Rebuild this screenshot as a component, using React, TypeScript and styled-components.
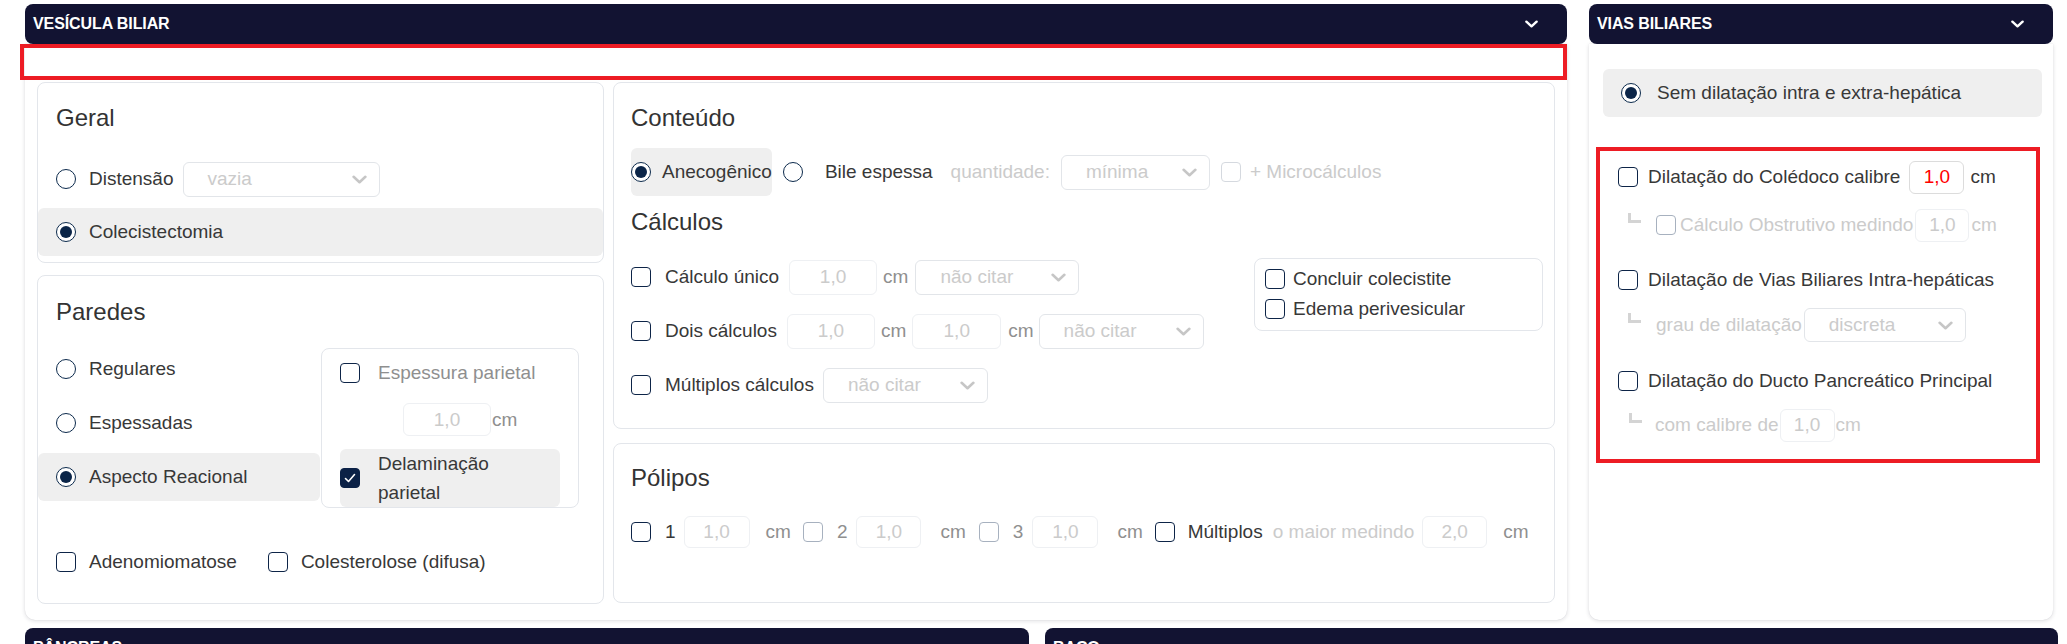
import React from "react";
import styled, { createGlobalStyle } from "styled-components";

type Tone = "dark" | "mid" | "light";

const toneColor = (t?: Tone) =>
  t === "mid" ? "#8f8f8f" : t === "light" ? "#cbcbcb" : "#383838";

const boxTone = (t?: Tone) =>
  t === "mid" ? "#a7b1bf" : t === "light" ? "#d5d9df" : "#0d2447";

const GlobalStyle = createGlobalStyle`
  html, body { margin: 0; padding: 0; background: #ffffff; overflow: hidden; }
  body {
    font-family: "Liberation Sans", Arial, Helvetica, sans-serif;
    font-size: 19px;
    color: #383838;
  }
  *, *::before, *::after { box-sizing: border-box; }
`;

const Page = styled.div`
  width: 2067px;
  height: 644px;
  overflow: hidden;
  padding: 4px 0 0 25px;
  display: flex;
  flex-direction: column;
  gap: 8px;
`;

const CardRow = styled.div<{ $gap: number }>`
  display: flex;
  align-items: flex-start;
  gap: ${(p) => p.$gap}px;
`;

const Card = styled.section<{ $w: number }>`
  width: ${(p) => p.$w}px;
  flex: none;
  display: flex;
  flex-direction: column;
`;

const CardHeader = styled.header`
  position: relative;
  z-index: 1;
  height: 40px;
  padding: 0 29px 0 8px;
  display: flex;
  align-items: center;
  justify-content: space-between;
  background: #121332;
  border-radius: 8px;
  color: #ffffff;
  font-size: 16px;
  font-weight: 700;
  letter-spacing: -0.1px;
`;

const CardBody = styled.div<{ $pad: string }>`
  height: 576px;
  padding: ${(p) => p.$pad};
  background: #ffffff;
  border-radius: 0 0 10px 10px;
  box-shadow: 0 1px 4px rgba(20, 24, 40, 0.14), 0 0 1px rgba(20, 24, 40, 0.14);
`;

const Annotation = styled.div`
  height: 36px;
  margin: 0 -12px 0 -17px;
  border: 4px solid #ed1c24;
`;

const VesGrid = styled.div`
  margin-top: 2px;
  display: grid;
  grid-template-columns: 567px 942px;
  column-gap: 9px;
  align-items: start;
`;

const Stack = styled.div<{ $gap: number; $w?: number; $pt?: number }>`
  display: flex;
  flex-direction: column;
  gap: ${(p) => p.$gap}px;
  width: ${(p) => (p.$w ? `${p.$w}px` : "auto")};
  padding-top: ${(p) => p.$pt ?? 0}px;
  flex: none;
`;

const Box = styled.div<{ $h: number; $pt: number; $pl?: number }>`
  height: ${(p) => p.$h}px;
  padding: ${(p) => p.$pt}px 0 0 ${(p) => p.$pl ?? 0}px;
  border: 1px solid #e3e6eb;
  border-radius: 8px;
  background: #ffffff;
`;

const BoxTitle = styled.h3<{ $ml?: number; $mt?: number; $mb: number }>`
  margin: ${(p) => p.$mt ?? 0}px 0 ${(p) => p.$mb}px ${(p) => p.$ml ?? 0}px;
  font-size: 24px;
  line-height: 28px;
  font-weight: 400;
  color: #333333;
`;

const Option = styled.div<{
  $h?: number;
  $pl?: number;
  $gap?: number;
  $hl?: boolean;
  $mt?: number;
}>`
  display: flex;
  align-items: center;
  flex: none;
  gap: ${(p) => p.$gap ?? 0}px;
  height: ${(p) => p.$h ?? 48}px;
  margin-top: ${(p) => p.$mt ?? 0}px;
  padding-left: ${(p) => p.$pl ?? 0}px;
  background: ${(p) => (p.$hl ? "#efefef" : "transparent")};
  border-radius: 6px;
  white-space: nowrap;
`;

const InlineOption = styled(Option)`
  align-self: flex-start;
`;

const Text = styled.span<{ $tone?: Tone; $ml?: number }>`
  color: ${(p) => toneColor(p.$tone)};
  margin-left: ${(p) => p.$ml ?? 0}px;
  white-space: nowrap;
  line-height: 22px;
`;

const WrapText = styled.span`
  width: 150px;
  line-height: 29px;
  white-space: normal;
  color: #383838;
`;

const RadioMark = styled.span<{ $on?: boolean; $ml?: number }>`
  flex: none;
  width: 20px;
  height: 20px;
  margin-left: ${(p) => p.$ml ?? 0}px;
  border-radius: 50%;
  border: 1.5px solid #0c2a4c;
  background: #ffffff;
  display: inline-flex;
  align-items: center;
  justify-content: center;
  &::after {
    content: "";
    width: 12px;
    height: 12px;
    border-radius: 50%;
    background: #0b2548;
    display: ${(p) => (p.$on ? "block" : "none")};
  }
`;

const CheckMark = styled.span<{ $on?: boolean; $tone?: Tone; $ml?: number }>`
  flex: none;
  width: 20px;
  height: 20px;
  margin-left: ${(p) => p.$ml ?? 0}px;
  border-radius: 4px;
  border: 1.5px solid ${(p) => (p.$on ? "#0b2146" : boxTone(p.$tone))};
  background: ${(p) => (p.$on ? "#0b2146" : "#ffffff")};
  display: inline-flex;
  align-items: center;
  justify-content: center;
`;

const SelectBox = styled.div<{ $w: number; $h?: number; $ml?: number }>`
  flex: none;
  width: ${(p) => p.$w}px;
  height: ${(p) => p.$h ?? 35}px;
  margin-left: ${(p) => p.$ml ?? 0}px;
  padding: 0 12px 0 24px;
  border: 1px solid #e2e5e9;
  border-radius: 6px;
  background: #ffffff;
  display: flex;
  align-items: center;
  justify-content: space-between;
  color: #cbcbcb;
`;

const NumBox = styled.div<{ $w: number; $h?: number; $ml?: number; $red?: boolean }>`
  flex: none;
  width: ${(p) => p.$w}px;
  height: ${(p) => p.$h ?? 33}px;
  margin-left: ${(p) => p.$ml ?? 0}px;
  border: 1px solid ${(p) => (p.$red ? "#dcdcdc" : "#eef0f3")};
  border-radius: 6px;
  background: #ffffff;
  display: flex;
  align-items: center;
  justify-content: center;
  color: ${(p) => (p.$red ? "#ff0000" : "#cbcbcb")};
`;

const ParedesSplit = styled.div`
  display: flex;
  align-items: flex-start;
  gap: 1px;
`;

const SubBox = styled.div`
  width: 258px;
  height: 160px;
  margin-top: 3px;
  padding: 7px 18px 0;
  border: 1px solid #e3e6eb;
  border-radius: 8px;
  display: flex;
  flex-direction: column;
`;

const MeasureLine = styled.div`
  display: flex;
  align-items: center;
  margin: 13px 0 0 63px;
  height: 33px;
`;

const InlineRow = styled.div<{ $h: number; $mt?: number }>`
  display: flex;
  align-items: center;
  height: ${(p) => p.$h}px;
  margin-top: ${(p) => p.$mt ?? 0}px;
  white-space: nowrap;
`;

const CalcArea = styled.div`
  margin-top: 22px;
  padding-right: 11px;
  display: flex;
  justify-content: space-between;
  align-items: flex-start;
`;

const SideBox = styled.div`
  width: 289px;
  height: 73px;
  padding: 5px 10px;
  border: 1px solid #e3e6eb;
  border-radius: 8px;
  display: flex;
  flex-direction: column;
`;

const RedFrame = styled.div`
  margin: 30px 2px 0 -7px;
  padding: 8px 0 16px 18px;
  border: 4px solid #ed1c24;
  display: flex;
  flex-direction: column;
`;

const Elbow = styled.span<{ $ml: number }>`
  flex: none;
  align-self: flex-start;
  width: 13px;
  height: 10px;
  margin: 6px 0 0 ${(p) => p.$ml}px;
  border-left: 3px solid #d4d4d4;
  border-bottom: 3px solid #d4d4d4;
`;

const Chevron = ({ color, w, h, sw }: { color: string; w: number; h: number; sw: number }) => (
  <svg width={w} height={h} viewBox="0 0 14 8" fill="none" aria-hidden="true">
    <polyline
      points="1.5,1.5 7,6.5 12.5,1.5"
      stroke={color}
      strokeWidth={sw}
      strokeLinecap="round"
      strokeLinejoin="round"
    />
  </svg>
);

const Tick = () => (
  <svg width="12" height="10" viewBox="0 0 12 10" fill="none" aria-hidden="true">
    <polyline
      points="1.5,5.5 4.5,8.5 10.5,1.5"
      stroke="#ffffff"
      strokeWidth="1.6"
      strokeLinecap="round"
      strokeLinejoin="round"
    />
  </svg>
);

const Select = ({ w, h, ml, label }: { w: number; h?: number; ml?: number; label: string }) => (
  <SelectBox $w={w} $h={h} $ml={ml}>
    <span>{label}</span>
    <Chevron color="#c6c6c6" w={15} h={9} sw={2.4} />
  </SelectBox>
);

const Header = ({ title }: { title: string }) => (
  <CardHeader>
    <span>{title}</span>
    <Chevron color="#ffffff" w={13} h={8} sw={2.6} />
  </CardHeader>
);

const Geral = () => (
  <Box $h={181} $pt={21}>
    <BoxTitle $ml={18} $mb={23}>Geral</BoxTitle>
    <Option $pl={18} $gap={13}>
      <RadioMark />
      <Text>Distensão</Text>
      <Select w={197} ml={-4} label="vazia" />
    </Option>
    <Option $pl={18} $gap={13} $hl $mt={5}>
      <RadioMark $on />
      <Text>Colecistectomia</Text>
    </Option>
  </Box>
);

const Paredes = () => (
  <Box $h={329} $pt={22}>
    <BoxTitle $ml={18} $mb={19}>Paredes</BoxTitle>
    <ParedesSplit>
      <Stack $gap={6} $w={282}>
        <Option $pl={18} $gap={13}>
          <RadioMark />
          <Text>Regulares</Text>
        </Option>
        <Option $pl={18} $gap={13}>
          <RadioMark />
          <Text>Espessadas</Text>
        </Option>
        <Option $pl={18} $gap={13} $hl>
          <RadioMark $on />
          <Text>Aspecto Reacional</Text>
        </Option>
      </Stack>
      <SubBox>
        <Option $h={34} $gap={18}>
          <CheckMark />
          <Text $tone="mid">Espessura parietal</Text>
        </Option>
        <MeasureLine>
          <NumBox $w={88}>1,0</NumBox>
          <Text $tone="mid" $ml={1}>cm</Text>
        </MeasureLine>
        <Option $h={58} $gap={18} $hl $mt={13}>
          <CheckMark $on>
            <Tick />
          </CheckMark>
          <WrapText>Delaminação parietal</WrapText>
        </Option>
      </SubBox>
    </ParedesSplit>
    <Option $pl={18} $gap={13} $mt={30}>
      <CheckMark />
      <Text>Adenomiomatose</Text>
      <CheckMark $ml={18} />
      <Text>Colesterolose (difusa)</Text>
    </Option>
  </Box>
);

const Conteudo = () => (
  <Box $h={347} $pt={21} $pl={17}>
    <BoxTitle $mb={16}>Conteúdo</BoxTitle>
    <InlineRow $h={48}>
      <InlineOption $gap={11} $hl>
        <RadioMark $on />
        <Text>Anecogênico</Text>
      </InlineOption>
      <RadioMark $ml={11} />
      <Text $ml={22}>Bile espessa</Text>
      <Text $tone="light" $ml={18}>quantidade:</Text>
      <Select w={149} ml={11} label="mínima" />
      <CheckMark $tone="light" $ml={11} />
      <Text $tone="light" $ml={9}>+ Microcálculos</Text>
    </InlineRow>
    <BoxTitle $mt={12} $mb={2}>Cálculos</BoxTitle>
    <CalcArea>
      <Stack $gap={18} $pt={1}>
        <InlineRow $h={36}>
          <CheckMark />
          <Text $ml={14}>Cálculo único</Text>
          <NumBox $w={88} $h={35} $ml={10}>1,0</NumBox>
          <Text $tone="mid" $ml={6}>cm</Text>
          <Select w={164} ml={7} label="não citar" />
        </InlineRow>
        <InlineRow $h={36}>
          <CheckMark />
          <Text $ml={14}>Dois cálculos</Text>
          <NumBox $w={88} $h={35} $ml={10}>1,0</NumBox>
          <Text $tone="mid" $ml={6}>cm</Text>
          <NumBox $w={89} $h={35} $ml={6}>1,0</NumBox>
          <Text $tone="mid" $ml={7}>cm</Text>
          <Select w={165} ml={5} label="não citar" />
        </InlineRow>
        <InlineRow $h={36}>
          <CheckMark />
          <Text $ml={14}>Múltiplos cálculos</Text>
          <Select w={165} ml={9} label="não citar" />
        </InlineRow>
      </Stack>
      <SideBox>
        <Option $h={30} $gap={8}>
          <CheckMark />
          <Text>Concluir colecistite</Text>
        </Option>
        <Option $h={30} $gap={8}>
          <CheckMark />
          <Text>Edema perivesicular</Text>
        </Option>
      </SideBox>
    </CalcArea>
  </Box>
);

const Polipos = () => (
  <Box $h={160} $pt={20} $pl={17}>
    <BoxTitle $mb={24}>Pólipos</BoxTitle>
    <InlineRow $h={32}>
      <CheckMark />
      <Text $ml={14}>1</Text>
      <NumBox $w={66} $h={32} $ml={8}>1,0</NumBox>
      <Text $tone="mid" $ml={16}>cm</Text>
      <CheckMark $tone="mid" $ml={12} />
      <Text $tone="mid" $ml={14}>2</Text>
      <NumBox $w={65} $h={32} $ml={9}>1,0</NumBox>
      <Text $tone="mid" $ml={19}>cm</Text>
      <CheckMark $tone="mid" $ml={13} />
      <Text $tone="mid" $ml={14}>3</Text>
      <NumBox $w={66} $h={32} $ml={9}>1,0</NumBox>
      <Text $tone="mid" $ml={19}>cm</Text>
      <CheckMark $ml={12} />
      <Text $ml={13}>Múltiplos</Text>
      <Text $tone="light" $ml={10}>o maior medindo</Text>
      <NumBox $w={65} $h={32} $ml={8}>2,0</NumBox>
      <Text $tone="mid" $ml={16}>cm</Text>
    </InlineRow>
  </Box>
);

const ViasBiliares = () => (
  <CardBody $pad="25px 11px 0 14px">
    <Option $pl={18} $gap={16} $hl>
      <RadioMark $on />
      <Text>Sem dilatação intra e extra-hepática</Text>
    </Option>
    <RedFrame>
      <InlineRow $h={36}>
        <CheckMark />
        <Text $ml={10}>Dilatação do Colédoco calibre</Text>
        <NumBox $w={55} $ml={9} $red>1,0</NumBox>
        <Text $ml={6}>cm</Text>
      </InlineRow>
      <InlineRow $h={36} $mt={12}>
        <Elbow $ml={10} />
        <CheckMark $tone="mid" $ml={15} />
        <Text $tone="light" $ml={4}>Cálculo Obstrutivo medindo</Text>
        <NumBox $w={54} $ml={2}>1,0</NumBox>
        <Text $tone="light" $ml={2}>cm</Text>
      </InlineRow>
      <InlineRow $h={36} $mt={19}>
        <CheckMark />
        <Text $ml={10}>Dilatação de Vias Biliares Intra-hepáticas</Text>
      </InlineRow>
      <InlineRow $h={36} $mt={9}>
        <Elbow $ml={10} />
        <Text $tone="light" $ml={15}>grau de dilatação</Text>
        <Select w={162} h={34} ml={2} label="discreta" />
      </InlineRow>
      <InlineRow $h={36} $mt={20}>
        <CheckMark />
        <Text $ml={10}>Dilatação do Ducto Pancreático Principal</Text>
      </InlineRow>
      <InlineRow $h={36} $mt={8}>
        <Elbow $ml={11} />
        <Text $tone="light" $ml={13}>com calibre de</Text>
        <NumBox $w={55} $ml={1}>1,0</NumBox>
        <Text $tone="light" $ml={1}>cm</Text>
      </InlineRow>
    </RedFrame>
  </CardBody>
);

export default function App() {
  return (
    <>
      <GlobalStyle />
      <Page>
        <CardRow $gap={22}>
          <Card $w={1542}>
            <Header title="VESÍCULA BILIAR" />
            <CardBody $pad="0 12px 16px 12px">
              <Annotation />
              <VesGrid>
                <Stack $gap={12}>
                  <Geral />
                  <Paredes />
                </Stack>
                <Stack $gap={14}>
                  <Conteudo />
                  <Polipos />
                </Stack>
              </VesGrid>
            </CardBody>
          </Card>
          <Card $w={464}>
            <Header title="VIAS BILIARES" />
            <ViasBiliares />
          </Card>
        </CardRow>
        <CardRow $gap={16}>
          <Card $w={1004}>
            <Header title="PÂNCREAS" />
          </Card>
          <Card $w={1013}>
            <Header title="BAÇO" />
          </Card>
        </CardRow>
      </Page>
    </>
  );
}
